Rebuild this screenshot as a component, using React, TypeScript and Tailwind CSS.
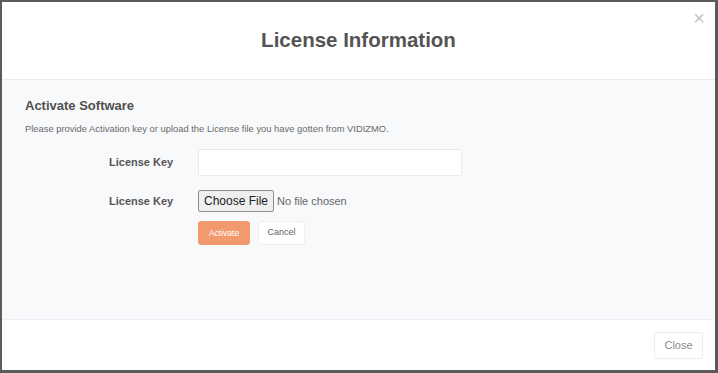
export default function App() {
  return (
    <div
      className="h-[373px] w-[718px] overflow-hidden border-t-2 border-r-[3px] border-b-[3px] border-l-2 border-[#5b5b5b] bg-white"
      style={{ fontFamily: '"Liberation Sans", Arial, sans-serif' }}
    >
      <div className="flex h-full flex-col">
        {/* header */}
        <div className="relative flex h-[78px] items-center justify-center border-b border-[#ebedf0]">
          <h1 className="text-[20.5px] font-bold text-[#545454]">License Information</h1>
          <span className="absolute top-[6px] right-[10px] text-[20px] leading-none font-light text-[#c4c4c4]">
            ×
          </span>
        </div>

        {/* body */}
        <div className="flex-1 bg-[#f8f9fb] px-[23px] pt-[18px]">
          <h2 className="text-[13px] leading-4 font-bold text-[#505050]">Activate Software</h2>
          <p className="mt-[8px] text-[9.4px] text-[#6a6a6a]">
            Please provide Activation key or upload the License file you have gotten from VIDIZMO.
          </p>

          <div className="mt-[13px] grid grid-cols-[173px_1fr] items-center">
            <label className="pl-[84px] text-[11px] font-bold text-[#555]">License Key</label>
            <div className="h-[27px] w-[264px] rounded-[2px] border border-[#e8eaed] bg-white" />

            <label className="mt-[14px] pl-[84px] text-[11px] font-bold text-[#555]">License Key</label>
            <div className="mt-[14px] flex items-center gap-[3px]">
              <span className="rounded-[2px] border border-[#8f8f8f] bg-[#efefef] px-[5px] py-[1px] text-[12px] text-[#222]">
                Choose File
              </span>
              <span className="text-[11px] text-[#666]">No file chosen</span>
            </div>

            <div />
            <div className="mt-[9px] flex gap-[8px]">
              <button className="h-[24px] w-[52px] rounded-[3px] bg-[#f29a6e] text-[8.5px] text-white">
                Activate
              </button>
              <button className="h-[24px] w-[47px] rounded-[3px] border border-[#eceef1] bg-white text-[9px] text-[#666]">
                Cancel
              </button>
            </div>
          </div>
        </div>

        {/* footer */}
        <div className="flex h-[51px] items-center justify-end border-t border-[#eeeff2] px-[12px]">
          <button className="h-[27px] w-[49px] rounded-[3px] border border-[#eceef1] bg-white text-[11px] text-[#8c8c8c]">
            Close
          </button>
        </div>
      </div>
    </div>
  );
}
